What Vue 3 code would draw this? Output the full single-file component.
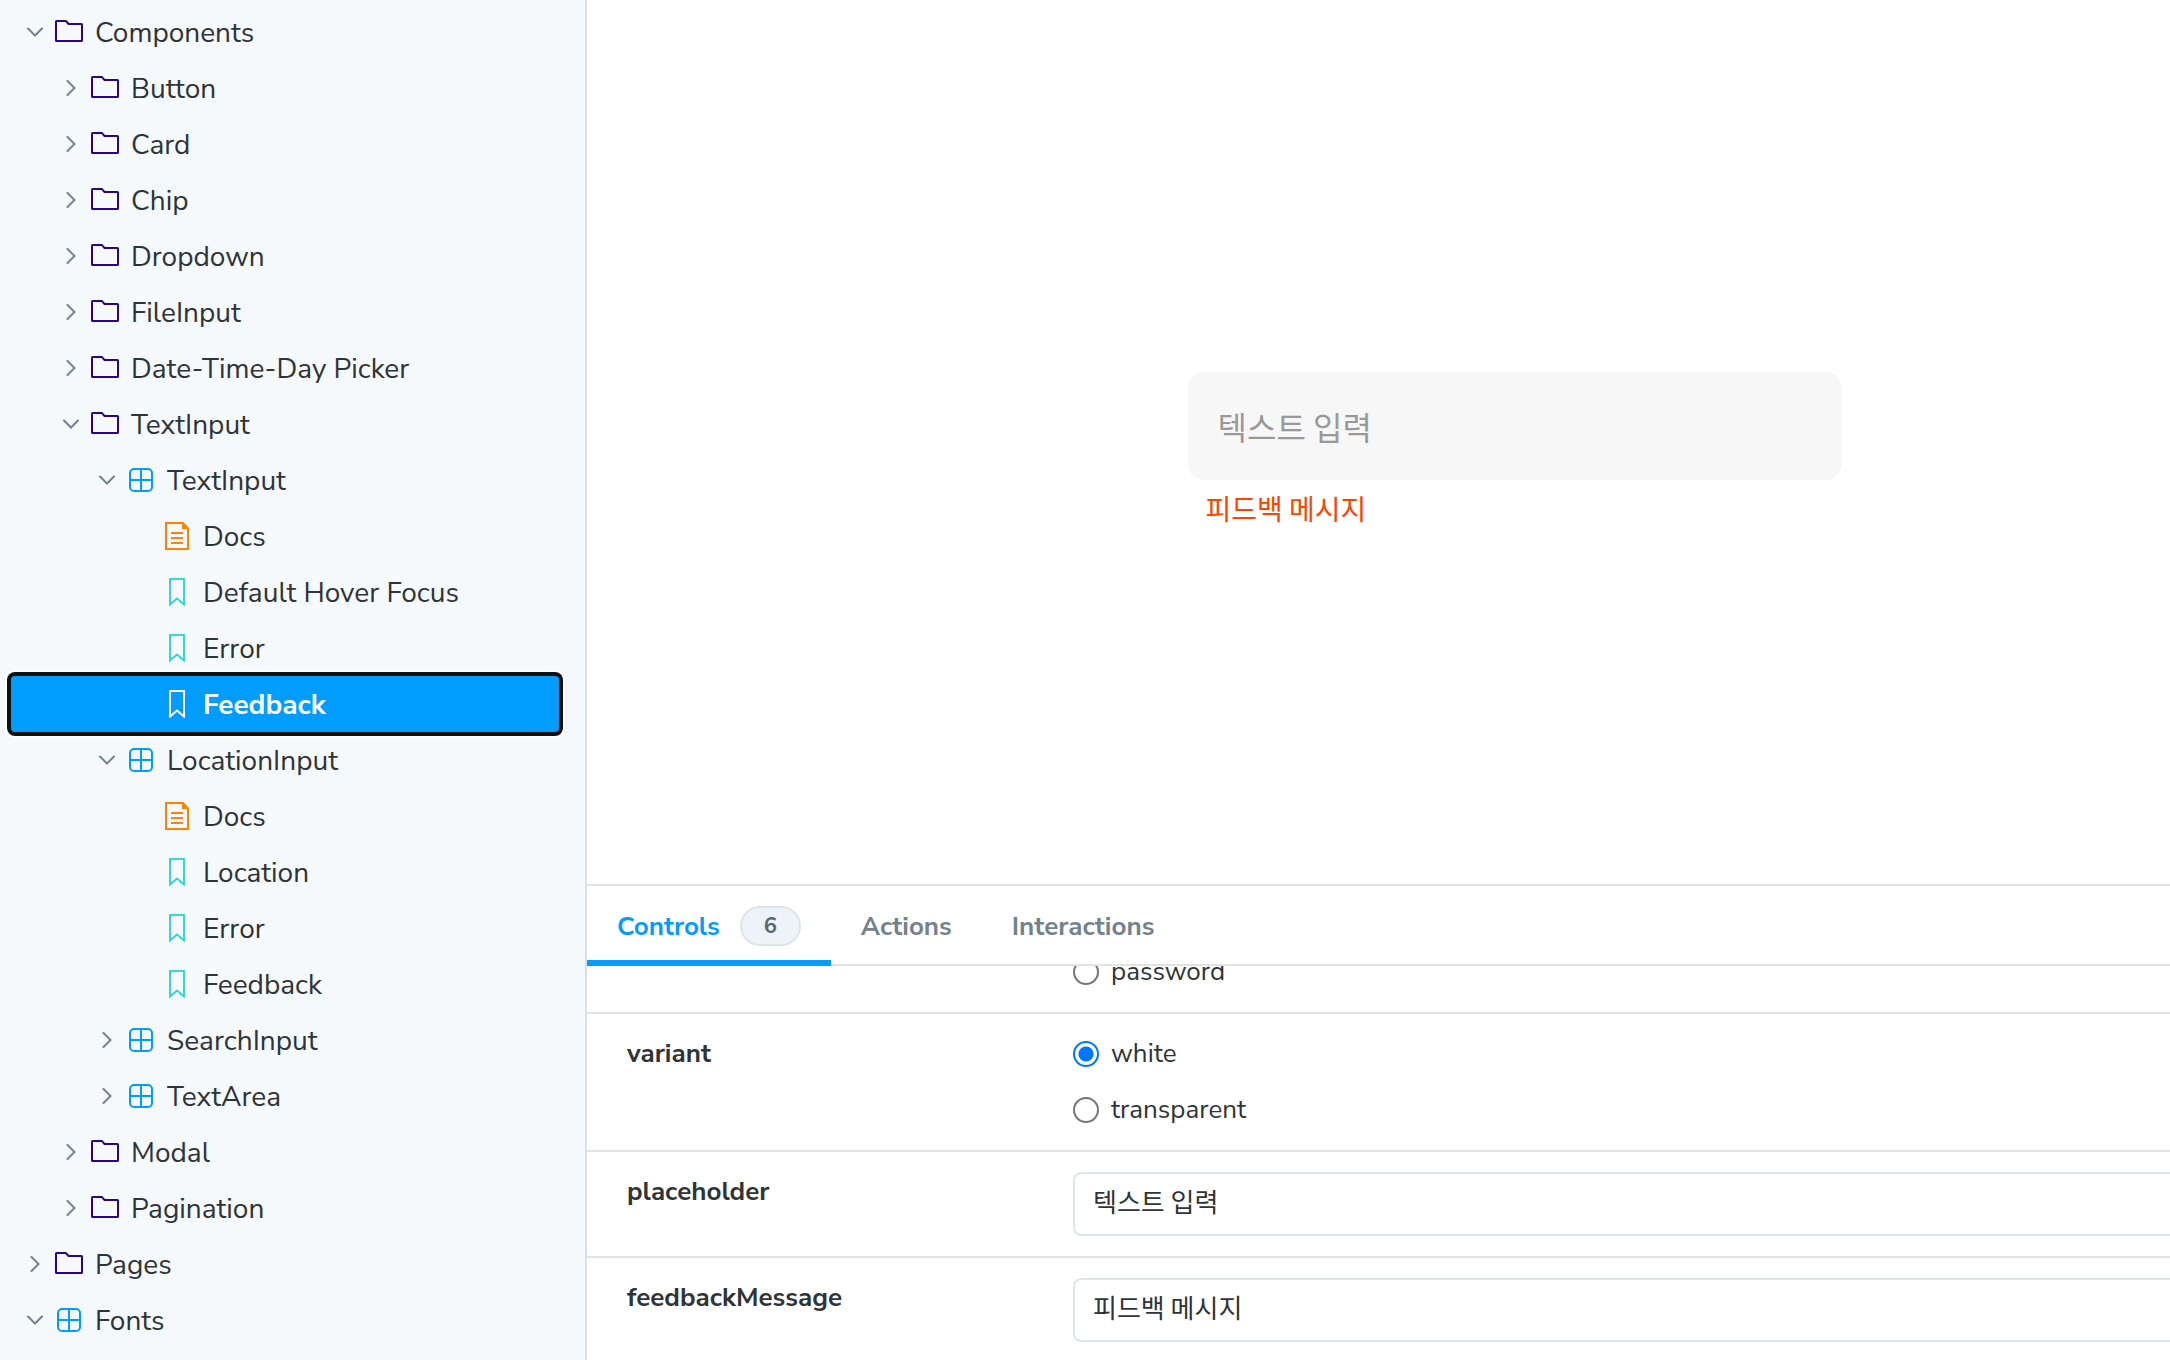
<script setup>
import { onMounted, ref } from "vue";

// ===== Sidebar tree =====
const tree = ref([
  { id: 1, label: "Components", type: "folder", level: 0, open: true },
  { id: 2, label: "Button", type: "folder", level: 1 },
  { id: 3, label: "Card", type: "folder", level: 1 },
  { id: 4, label: "Chip", type: "folder", level: 1 },
  { id: 5, label: "Dropdown", type: "folder", level: 1 },
  { id: 6, label: "FileInput", type: "folder", level: 1 },
  { id: 7, label: "Date-Time-Day Picker", type: "folder", level: 1 },
  { id: 8, label: "TextInput", type: "folder", level: 1, open: true },
  { id: 9, label: "TextInput", type: "component", level: 2, open: true },
  { id: 10, label: "Docs", type: "docs", level: 3 },
  { id: 11, label: "Default Hover Focus", type: "story", level: 3 },
  { id: 12, label: "Error", type: "story", level: 3 },
  { id: 13, label: "Feedback", type: "story", level: 3 },
  { id: 14, label: "LocationInput", type: "component", level: 2, open: true },
  { id: 15, label: "Docs", type: "docs", level: 3 },
  { id: 16, label: "Location", type: "story", level: 3 },
  { id: 17, label: "Error", type: "story", level: 3 },
  { id: 18, label: "Feedback", type: "story", level: 3 },
  { id: 19, label: "SearchInput", type: "component", level: 2 },
  { id: 20, label: "TextArea", type: "component", level: 2 },
  { id: 21, label: "Modal", type: "folder", level: 1 },
  { id: 22, label: "Pagination", type: "folder", level: 1 },
  { id: 23, label: "Pages", type: "folder", level: 0 },
  { id: 24, label: "Fonts", type: "component", level: 0, open: true },
]);
const selectedId = ref(13);

function isLeaf(node) {
  return node.type === "docs" || node.type === "story";
}

function onSelect(node) {
  if (isLeaf(node)) selectedId.value = node.id;
  else node.open = !node.open;
}

// ===== Addon panel =====
const tabs = [
  { name: "Controls", count: 6 },
  { name: "Actions" },
  { name: "Interactions" },
];
const activeTab = ref("Controls");

const inputType = ref("text");
const variant = ref("white");
const placeholder = ref("텍스트 입력");
const feedbackMessage = ref("피드백 메시지");
const value = ref("");

const panelBody = ref(null);
onMounted(() => {
  panelBody.value.scrollTop = 34;
});
</script>

<template>
  <div class="app">
    <nav class="sidebar">
      <ul class="tree">
        <li v-for="node in tree" :key="node.id">
          <component
            :is="isLeaf(node) ? 'a' : 'button'"
            :href="isLeaf(node) ? '#' : null"
            class="node"
            :class="['level' + node.level, { selected: node.id === selectedId }]"
            @click.prevent="onSelect(node)"
          >
            <span class="chevron">
              <svg v-if="!isLeaf(node)" viewBox="0 0 16 16" width="16" height="16">
                <path v-if="node.open" d="M1 4.5L8 11.5L15 4.5" />
                <path v-else d="M4.5 1L11.5 8L4.5 15" />
              </svg>
            </span>
            <svg class="icon" :class="node.type" viewBox="0 0 28 28" width="28" height="28">
              <path
                v-if="node.type === 'folder'"
                d="M1 3.5a.5.5 0 0 1 .5-.5H10.5a1 1 0 0 1 .7.3L13.5 6H26.5a.5.5 0 0 1 .5.5V22.5a.5.5 0 0 1-.5.5H1.5a.5.5 0 0 1-.5-.5z"
              />
              <template v-else-if="node.type === 'component'">
                <rect x="3" y="3" width="22" height="22" rx="4" />
                <path d="M14 3V25M3 14H25" />
              </template>
              <template v-else-if="node.type === 'docs'">
                <path d="M3 1H20L25 6.5V27H3z" />
                <path class="fold" d="M19 1L25 7H19z" />
                <path d="M8 11H20M8 16H20M8 21H20" />
              </template>
              <path v-else d="M7 1H21V26.5L14 20.5L7 26.5z" />
            </svg>
            <span class="label">{{ node.label }}</span>
          </component>
        </li>
      </ul>
    </nav>

    <main class="main">
      <section class="preview">
        <div class="field">
          <input class="fieldInput" aria-label="텍스트 입력" :placeholder="placeholder" v-model="value" />
          <p class="feedback">{{ feedbackMessage }}</p>
        </div>
      </section>

      <section class="panel">
        <div class="tabs" role="tablist">
          <button
            v-for="tab in tabs"
            :key="tab.name"
            class="tab"
            :class="{ active: tab.name === activeTab }"
            role="tab"
            @click="activeTab = tab.name"
          >
            {{ tab.name }}
            <span v-if="tab.count" class="badge">{{ tab.count }}</span>
          </button>
        </div>

        <div ref="panelBody" class="panelBody">
          <table class="controls">
            <tbody>
              <tr>
                <th></th>
                <td>
                  <label class="option">
                    <input v-model="inputType" type="radio" name="type" value="password" />
                    <span>password</span>
                  </label>
                </td>
              </tr>
              <tr>
                <th scope="row">variant</th>
                <td>
                  <div class="options">
                    <label class="option">
                      <input v-model="variant" type="radio" name="variant" value="white" />
                      <span>white</span>
                    </label>
                    <label class="option">
                      <input v-model="variant" type="radio" name="variant" value="transparent" />
                      <span>transparent</span>
                    </label>
                  </div>
                </td>
              </tr>
              <tr>
                <th scope="row"><label for="placeholder">placeholder</label></th>
                <td><textarea id="placeholder" v-model="placeholder" rows="1"></textarea></td>
              </tr>
              <tr>
                <th scope="row"><label for="feedbackMessage">feedbackMessage</label></th>
                <td><textarea id="feedbackMessage" v-model="feedbackMessage" rows="1"></textarea></td>
              </tr>
            </tbody>
          </table>
        </div>
      </section>
    </main>
  </div>
</template>

<style>
body {
  overflow: hidden;
}
</style>

<style scoped>
.app {
  display: flex;
  height: 100vh;
  background: #fff;
  color: #2e3438;
  font-family: "Nunito Sans", Lato, "Noto Sans CJK KR", sans-serif;
  font-size: 26px;
}
.app * {
  box-sizing: border-box;
}

/* Sidebar */
.sidebar {
  flex: 0 0 587px;
  padding: 4px 26px 0 11px;
  overflow: hidden;
  background: #f6f9fc;
  border-right: 2px solid #d9e0e6;
}
.tree {
  margin: 0;
  padding: 0;
  list-style: none;
}
.node {
  display: flex;
  align-items: center;
  gap: 12px;
  width: 100%;
  height: 56px;
  padding: 0 16px;
  border: 0;
  background: none;
  color: inherit;
  font: inherit;
  font-size: 28px;
  text-align: left;
  text-decoration: none;
  cursor: pointer;
}
.level1 {
  padding-left: 52px;
}
.level2 {
  padding-left: 88px;
}
.level3 {
  padding-left: 124px;
}
.node.selected {
  position: relative;
  border-radius: 4px;
  background: #029cff;
  box-shadow: 0 0 0 4px #111, 0 0 0 6px #fff;
  color: #fff;
  font-weight: 700;
}
.label {
  padding-top: 2px;
}
.chevron {
  display: flex;
  width: 16px;
}
.chevron svg,
.icon {
  flex: none;
  fill: none;
  stroke-width: 2;
}
.chevron svg {
  stroke: #73828c;
  stroke-linecap: round;
}
.folder {
  stroke: #2a0481;
}
.component {
  stroke: #029cff;
}
.docs {
  stroke: #ff8300;
}
.docs .fold {
  fill: #ff8300;
  stroke: none;
}
.story {
  stroke: #37d5d3;
}
.selected .story {
  stroke: #fff;
}

/* Preview */
.main {
  display: flex;
  flex: 1;
  flex-direction: column;
  min-width: 0;
}
.preview {
  display: flex;
  flex: 1;
  align-items: center;
  padding: 16px 0 0 calc(38% - 1px);
}
.field {
  width: 654px;
}
.fieldInput {
  display: block;
  width: 100%;
  height: 108px;
  padding: 0 30px;
  border: 0;
  border-radius: 16px;
  background: #f7f7f7;
  font-family: "Noto Sans CJK KR", sans-serif;
  font-size: 32px;
}
.fieldInput::placeholder {
  color: #999;
}
.feedback {
  margin: 8px 0 0;
  padding-left: 18px;
  color: #ff4400;
  font-family: "Noto Sans CJK KR", sans-serif;
  font-size: 28px;
  line-height: 40px;
}

/* Panel */
.panel {
  display: flex;
  flex: 0 0 476px;
  flex-direction: column;
  min-height: 0;
  border-top: 2px solid #dee4e8;
}
.tabs {
  display: flex;
  flex: none;
  height: 80px;
  box-shadow: inset 0 -2px #dee4e8;
}
.tab {
  display: flex;
  align-items: center;
  gap: 20px;
  padding: 6px 30px 0;
  border: 0;
  border-bottom: 6px solid transparent;
  background: none;
  color: #73828c;
  font: inherit;
  font-weight: 700;
  cursor: pointer;
}
.tab.active {
  border-bottom-color: #029cff;
  color: #029cff;
}
.badge {
  width: 61px;
  height: 40px;
  border: 2px solid #dee6ea;
  border-radius: 20px;
  background: #ecf4f9;
  color: #5c6870;
  font-size: 22px;
  line-height: 36px;
  text-align: center;
}
.panelBody {
  flex: 1;
  min-height: 0;
  overflow: auto;
  overflow-x: hidden;
  scrollbar-width: none;
}
.controls {
  width: calc(100% + 40px);
  table-layout: fixed;
  border-spacing: 0;
}
.controls th,
.controls td {
  padding: 20px 0;
  vertical-align: top;
}
.controls tr + tr > * {
  border-top: 2px solid #dee4e8;
}
.controls th {
  width: 486px;
  padding-left: 40px;
  font-weight: 700;
  line-height: 40px;
  text-align: left;
}
.options {
  display: flex;
  flex-direction: column;
  gap: 16px;
}
.option {
  display: flex;
  align-items: center;
  gap: 12px;
  height: 40px;
}
.option span {
  padding-bottom: 2px;
}
.option input {
  width: 26px;
  height: 26px;
  margin: 0;
  border: 2px solid #767676;
  border-radius: 50%;
  background: #fff;
  appearance: none;
}
.option input:checked {
  border-color: #0075ff;
  background: radial-gradient(circle, #0075ff 7px, #fff 8px);
}
textarea {
  display: block;
  width: 100%;
  height: 64px;
  padding: 10px 18px;
  border: 2px solid #dee6ea;
  border-radius: 8px;
  outline: 0;
  background: #fff;
  color: inherit;
  font-family: "Noto Sans CJK KR", sans-serif;
  font-size: 26px;
  line-height: 34px;
  overflow: hidden;
  resize: none;
}
</style>
